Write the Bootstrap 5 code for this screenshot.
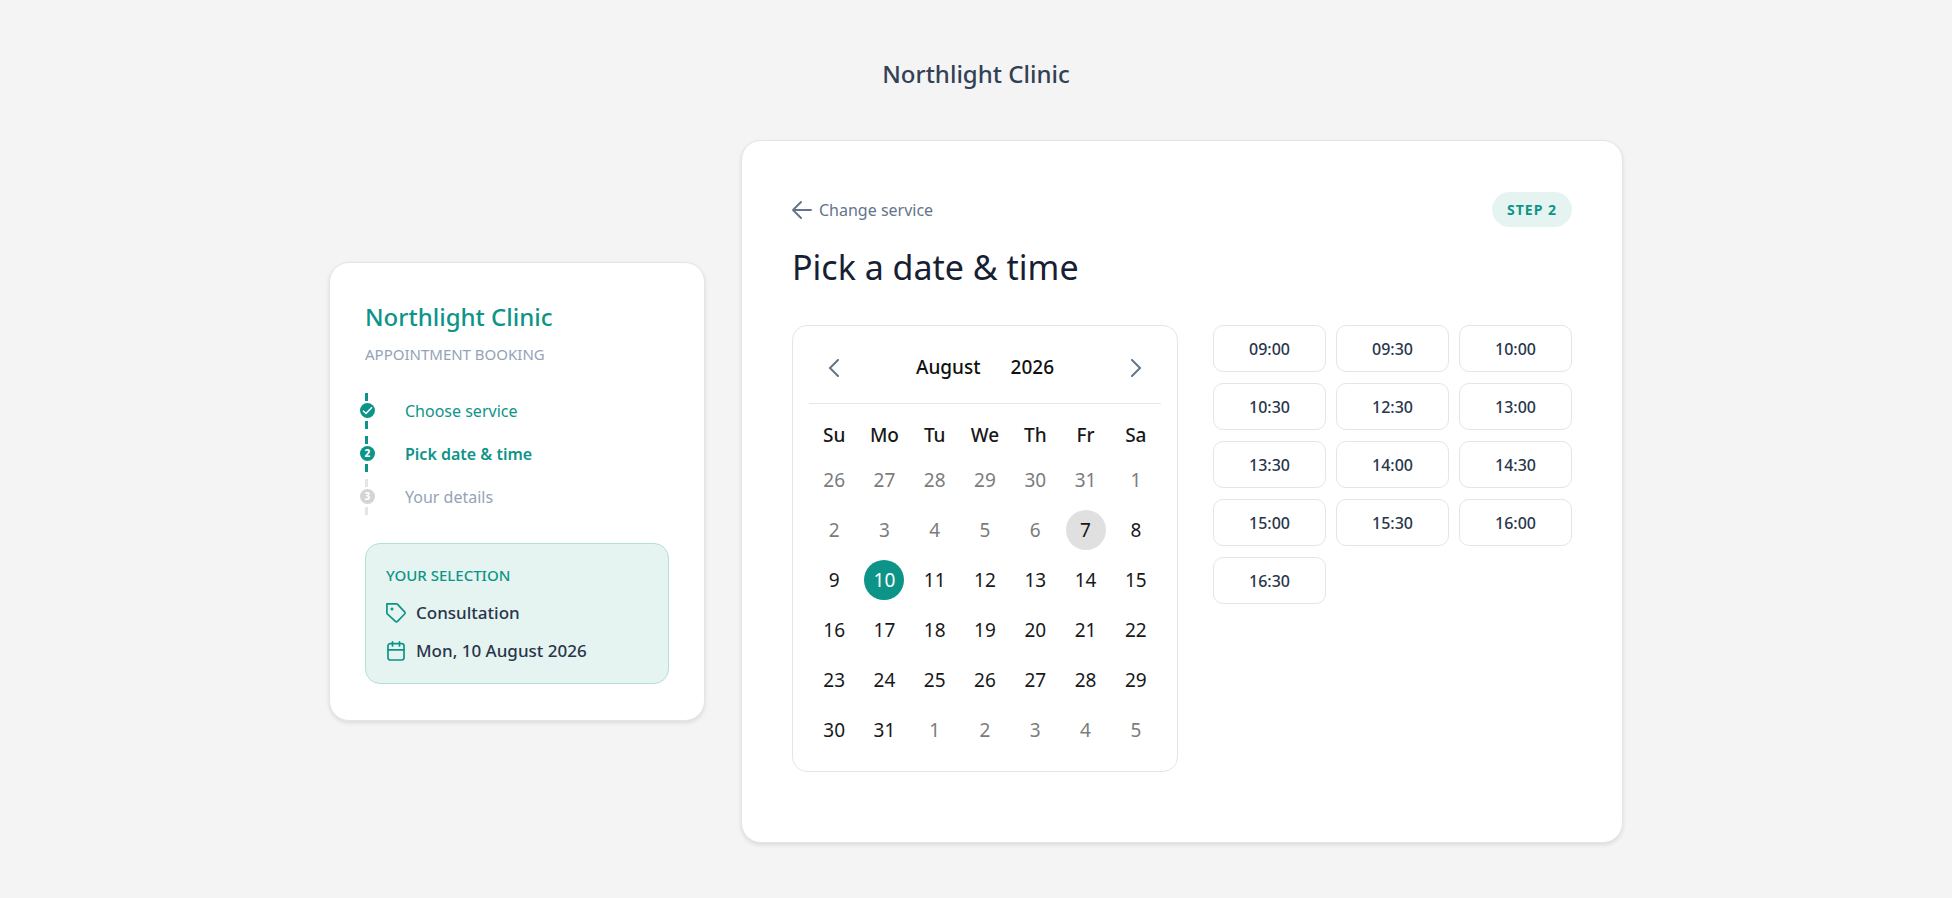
<!DOCTYPE html>
<html lang="en">
<head>
<meta charset="utf-8">
<meta name="viewport" content="width=device-width, initial-scale=1">
<title>Northlight Clinic – Pick a date &amp; time</title>
<link href="https://cdn.jsdelivr.net/npm/bootstrap@5.3.0/dist/css/bootstrap.min.css" rel="stylesheet">
<style>
:root{--teal:#0d9488;--teal-soft:#e6f4f1;--ink:#28364b;--navy:#334155;--slate:#64748b;--mist:#94a3b8;--edge:#e7e5e4}
body{background:#f4f4f4;color:var(--ink);font-family:"Noto Sans","Open Sans",sans-serif;font-size:16px;line-height:24px}
.brand{font-size:24px;line-height:36px;font-weight:500;color:var(--navy);margin-bottom:48px}
.booking{max-width:1342px;gap:36px}
.panel{border:1px solid var(--edge);border-radius:20px;background:#fff;box-shadow:0 2px 4px rgba(0,0,0,.1)}
.side{flex:0 1 376px;padding:36px 35px}
.main{flex:1 1 0;min-width:0;min-height:703px;padding:51px 50px 50px}
.side-title{font-size:24px;line-height:36px;font-weight:500;color:var(--teal)}
.side-sub{font-size:15px;line-height:20px;color:var(--mist);text-transform:uppercase;margin-top:9px}
.steps{margin:29px 0 0;gap:7px}
.step{height:36px;gap:31px;color:var(--teal)}
.rail{width:3px;height:36px;gap:20px}
.rail::before,.rail::after{content:"";width:3px;height:8px;background:currentColor}
.dot{left:-5px;top:10px;width:15px;height:15px;background:var(--teal);color:#fff;font-size:10px;font-weight:800;line-height:15px}
.step .step-text{padding-left:6px}
.step.now .step-text{font-weight:600}
.step.todo .rail{color:var(--edge)}
.step.todo .dot{background:#d6d3d1}
.step.todo .step-text{color:var(--mist)}
.choice{margin-top:28px;padding:19px 20px 20px;border:1px solid #b2dfd6;border-radius:15px;background:var(--teal-soft)}
.choice-head{font-size:15px;line-height:24px;font-weight:500;color:var(--teal);text-transform:uppercase}
.choice-row{margin-top:14px;gap:10px;font-size:17px;font-weight:500}
.choice-row svg{color:var(--teal)}
.back{color:var(--slate);gap:7px}
.step-pill{padding:5px 15px;line-height:25px;font-size:14px;font-weight:700;letter-spacing:1px;background:var(--teal-soft);color:var(--teal)}
h1.page-title{font-size:34px;line-height:48px;font-weight:400;color:#172033;margin:16px 0 34px}
.pickers{gap:35px}
.calendar{flex:0 1 386px;border:1px solid var(--edge);border-radius:15px;padding:16px}
.cal-top{height:62px;padding-bottom:12px;border-bottom:1px solid #e2e8f0}
.plain{border:0;background:none;padding:0;color:inherit;font:inherit}
.arrow{width:50px;height:40px;color:var(--slate)}
.cal-name{font-size:19px;font-weight:500;gap:30px;color:#111}
.days{table-layout:fixed;width:100%;margin-top:7px;font-size:19px;text-align:center;color:#18181b}
.days th{height:44px;padding:3px 0 0;font-weight:500}
.days td{height:50px;padding:0}
.day{width:40px;height:40px;border-radius:50%;line-height:40px}
.day:disabled{color:#7c7c7c}
.day.today{background:#e0e0e0}
.day.chosen{background:var(--teal);color:#fff}
.slots{flex:1 1 0;display:grid;grid-template-columns:repeat(3,1fr);gap:11px 10px}
.slot{height:47px;padding:0;border:1px solid var(--edge);border-radius:10px;background:#fff;color:var(--ink);font-size:16px;font-weight:500}
@media (max-width:1199px){.booking,.pickers{flex-wrap:wrap}.side,.main,.slots{flex-basis:100%}}
</style>
</head>
<body>
<header class="text-center pt-5"><div class="brand mt-2">Northlight Clinic</div></header>
<div class="booking d-flex align-items-center mx-auto px-4 pb-5">
  <aside class="panel side">
    <div class="side-title">Northlight Clinic</div>
    <div class="side-sub">Appointment booking</div>
    <ol class="steps list-unstyled d-flex flex-column">
      <li class="step d-flex align-items-center">
        <span class="rail d-flex flex-column position-relative"><span class="dot position-absolute rounded-circle d-flex"><svg width="15" height="15" viewBox="0 0 15 15" fill="none" stroke="#fff" stroke-width="1.5"><path d="M3 7.8l3 2.7 6-6.3"/></svg></span></span>
        <span class="step-text">Choose service</span>
      </li>
      <li class="step now d-flex align-items-center" aria-current="step">
        <span class="rail d-flex flex-column position-relative"><span class="dot position-absolute rounded-circle text-center">2</span></span>
        <span class="step-text">Pick date &amp; time</span>
      </li>
      <li class="step todo d-flex align-items-center">
        <span class="rail d-flex flex-column position-relative"><span class="dot position-absolute rounded-circle text-center">3</span></span>
        <span class="step-text">Your details</span>
      </li>
    </ol>
    <section class="choice">
      <div class="choice-head">Your selection</div>
      <div class="choice-row d-flex align-items-center">
        <svg width="20" height="20" viewBox="0 0 20 20" fill="none" stroke="currentColor" stroke-width="1.7" stroke-linejoin="round"><path d="M.9.9h9.600c.5 0 .8.1 1.100.4l7 7.500c.6.700.6 1.500 0 2.200l-7.100 7.400c-.6.600-1.500.600-2.100 0L1.300 10.900c-.3-.3-.4-.6-.4-1z"/><circle cx="6" cy="6" r="1.100" fill="currentColor" stroke-width="1"/></svg>
        <span>Consultation</span>
      </div>
      <div class="choice-row d-flex align-items-center">
        <svg width="20" height="20" viewBox="0 0 20 20" fill="none" stroke="currentColor" stroke-width="1.7" stroke-linecap="round"><rect x="2" y="2.700" width="16" height="16.300" rx="2.200"/><path d="M2 8.800h16M6.500.9v4M13.500.9v4"/></svg>
        <span>Mon, 10 August 2026</span>
      </div>
    </section>
  </aside>
  <main class="panel main">
    <div class="d-flex justify-content-between align-items-center">
      <a href="#" class="back d-flex align-items-center text-decoration-none">
        <svg width="20" height="18" viewBox="0 0 20 18" fill="none" stroke="currentColor" stroke-width="1.900" stroke-linecap="round" stroke-linejoin="round"><path d="M19 9H1M9 1L1 9l8 8"/></svg>
        <span>Change service</span>
      </a>
      <span class="step-pill rounded-pill">STEP 2</span>
    </div>
    <h1 class="page-title">Pick a date &amp; time</h1>
    <div class="pickers d-flex align-items-start">
      <section class="calendar" aria-label="Calendar">
        <div class="cal-top d-flex justify-content-between align-items-center">
          <button type="button" class="plain arrow" aria-label="Previous month"><svg width="12" height="18" viewBox="0 0 12 18" fill="none" stroke="currentColor" stroke-width="2" stroke-linecap="round"><path d="M10 1L2 9l8 8"/></svg></button>
          <div class="cal-name d-flex"><button type="button" class="plain">August</button><button type="button" class="plain">2026</button></div>
          <button type="button" class="plain arrow" aria-label="Next month"><svg width="12" height="18" viewBox="0 0 12 18" fill="none" stroke="currentColor" stroke-width="2" stroke-linecap="round"><path d="M2 1l8 8-8 8"/></svg></button>
        </div>
        <table class="days">
          <thead><tr><th>Su</th><th>Mo</th><th>Tu</th><th>We</th><th>Th</th><th>Fr</th><th>Sa</th></tr></thead>
          <tbody>
            <tr><td><button class="plain day" disabled>26</button></td><td><button class="plain day" disabled>27</button></td><td><button class="plain day" disabled>28</button></td><td><button class="plain day" disabled>29</button></td><td><button class="plain day" disabled>30</button></td><td><button class="plain day" disabled>31</button></td><td><button class="plain day" disabled>1</button></td></tr>
            <tr><td><button class="plain day" disabled>2</button></td><td><button class="plain day" disabled>3</button></td><td><button class="plain day" disabled>4</button></td><td><button class="plain day" disabled>5</button></td><td><button class="plain day" disabled>6</button></td><td><button class="plain day today">7</button></td><td><button class="plain day">8</button></td></tr>
            <tr><td><button class="plain day">9</button></td><td><button class="plain day chosen" aria-pressed="true">10</button></td><td><button class="plain day">11</button></td><td><button class="plain day">12</button></td><td><button class="plain day">13</button></td><td><button class="plain day">14</button></td><td><button class="plain day">15</button></td></tr>
            <tr><td><button class="plain day">16</button></td><td><button class="plain day">17</button></td><td><button class="plain day">18</button></td><td><button class="plain day">19</button></td><td><button class="plain day">20</button></td><td><button class="plain day">21</button></td><td><button class="plain day">22</button></td></tr>
            <tr><td><button class="plain day">23</button></td><td><button class="plain day">24</button></td><td><button class="plain day">25</button></td><td><button class="plain day">26</button></td><td><button class="plain day">27</button></td><td><button class="plain day">28</button></td><td><button class="plain day">29</button></td></tr>
            <tr><td><button class="plain day">30</button></td><td><button class="plain day">31</button></td><td><button class="plain day" disabled>1</button></td><td><button class="plain day" disabled>2</button></td><td><button class="plain day" disabled>3</button></td><td><button class="plain day" disabled>4</button></td><td><button class="plain day" disabled>5</button></td></tr>
          </tbody>
        </table>
      </section>
      <section class="slots" aria-label="Available times">
        <button type="button" class="slot">09:00</button><button type="button" class="slot">09:30</button><button type="button" class="slot">10:00</button>
        <button type="button" class="slot">10:30</button><button type="button" class="slot">12:30</button><button type="button" class="slot">13:00</button>
        <button type="button" class="slot">13:30</button><button type="button" class="slot">14:00</button><button type="button" class="slot">14:30</button>
        <button type="button" class="slot">15:00</button><button type="button" class="slot">15:30</button><button type="button" class="slot">16:00</button>
        <button type="button" class="slot">16:30</button>
      </section>
    </div>
  </main>
</div>
<script src="https://cdn.jsdelivr.net/npm/bootstrap@5.3.0/dist/js/bootstrap.bundle.min.js"></script>
</body>
</html>
